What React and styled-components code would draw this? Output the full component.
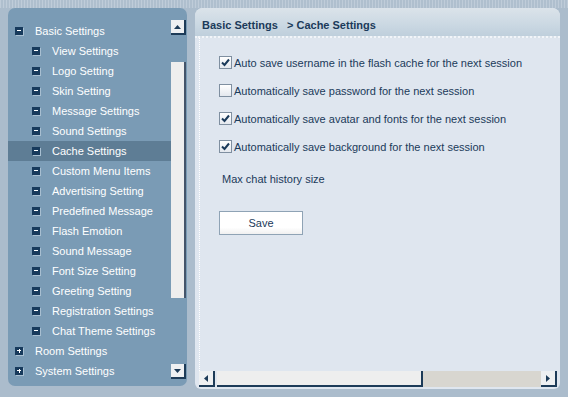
import React from 'react';
import styled, { createGlobalStyle } from 'styled-components';

const Global = createGlobalStyle`
  html, body { margin: 0; padding: 0; }
  body { background: #abbccc; font-family: "Liberation Sans", Arial, sans-serif; }
`;

const Page = styled.div`
  width: 568px;
  height: 397px;
  box-sizing: border-box;
  padding: 8px 8px 0 8px;
  display: flex;
  align-items: flex-start;
  gap: 8px;
  background:
    repeating-linear-gradient(90deg, #bfccd9 0 1px, #afbfce 1px 3px) top / 100% 8px no-repeat,
    #abbccc;
`;

const LeftPanel = styled.div`
  width: 179px;
  height: 378px;
  background: #7a9bb5;
  border-radius: 7px;
  display: flex;
  overflow: hidden;
`;

const Tree = styled.div`
  flex: 1;
  padding-top: 13px;
`;

const Row = styled.div`
  height: 20px;
  display: flex;
  align-items: center;
  padding-left: ${p => 7 + p.$level * 17}px;
  background: ${p => (p.$active ? '#5e7d95' : 'transparent')};
  color: #ffffff;
  font-size: 11px;
  white-space: nowrap;
`;

const NodeIcon = styled.span`
  position: relative;
  width: 8px;
  height: 8px;
  background: #173a5c;
  margin-right: 12px;
  flex: none;
  box-shadow: 1px 1px 0 #a8bfd1;
  &::before {
    content: '';
    position: absolute;
    left: 2px;
    top: 3px;
    width: 4px;
    height: 1px;
    background: #fff;
  }
  &::after {
    content: '';
    position: absolute;
    left: 3.5px;
    top: 1.5px;
    width: 1px;
    height: 4px;
    background: #fff;
    display: ${p => (p.$plus ? 'block' : 'none')};
  }
`;

const VScroll = styled.div`
  width: 16px;
  padding: 12px 0 7px;
  display: flex;
  flex-direction: column;
`;

const ScrollBtn = styled.div`
  width: ${p => (p.$w ? p.$w : 15)}px;
  height: ${p => (p.$h ? p.$h : 15)}px;
  box-sizing: border-box;
  background: #eef0f2;
  border-right: 2px solid #1d3b58;
  border-bottom: 2px solid #1d3b58;
  display: flex;
  align-items: center;
  justify-content: center;
  flex: none;
`;

const VThumb = styled.div`
  margin-top: 27px;
  height: 236px;
  width: 15px;
  box-sizing: border-box;
  background: #eeeeee;
  border-right: 2px solid #44546a;
`;

const Spacer = styled.div`
  flex: 1;
`;

const RightPanel = styled.div`
  width: 365px;
  height: 381px;
  background: #dfe6ef;
  border-radius: 8px 8px 6px 6px;
  display: flex;
  flex-direction: column;
  overflow: hidden;
`;

const Header = styled.div`
  height: 30px;
  box-sizing: border-box;
  padding: 6px 0 0 7px;
  display: flex;
  align-items: center;
  font-size: 11px;
  font-weight: bold;
  color: #1b3a5a;
  background: linear-gradient(#dbe3ea, #ccd9e3 55%, #bfcfdc);
  border-bottom: 2px dotted #f2f5f9;
  white-space: pre;
`;

const Body = styled.div`
  flex: 1;
  display: flex;
  flex-direction: column;
  padding: 0 3px 2px 4px;
`;

const Content = styled.div`
  flex: 1;
  border-left: 1px dotted #ffffff;
  padding: 18px 0 0 19px;
  color: #1b3a5a;
  font-size: 11px;
`;

const CheckRow = styled.label`
  display: flex;
  align-items: center;
  height: 13px;
  margin-bottom: 15px;
  gap: 2px;
  white-space: nowrap;
`;

const Box = styled.span`
  width: 13px;
  height: 13px;
  box-sizing: border-box;
  border: 1px solid #7f8fa0;
  background: linear-gradient(#ffffff, #e4e8ee);
  display: flex;
  align-items: center;
  justify-content: center;
  flex: none;
`;

const FieldLabel = styled.div`
  margin: 20px 0 0 3px;
  height: 13px;
  line-height: 13px;
`;

const SaveButton = styled.button`
  display: block;
  margin-top: 25px;
  width: 84px;
  height: 24px;
  box-sizing: border-box;
  border: 1px solid #8fa3b5;
  background: linear-gradient(#ffffff 70%, #f0f0f0 100%);
  font-family: "Liberation Sans", Arial, sans-serif;
  font-size: 11px;
  color: #1b3a5a;
  padding: 0;
`;

const HScroll = styled.div`
  height: 16px;
  display: flex;
  align-items: stretch;
`;

const HThumb = styled.div`
  width: 206px;
  margin-left: 2px;
  box-sizing: border-box;
  background: #eeeeee;
  border-right: 2px solid #1d3b58;
  border-bottom: 2px solid #1d3b58;
`;

const HTrack = styled.div`
  flex: 1;
  background: #d8d6d0;
`;

const Arrow = ({ dir }) => {
  const pts = {
    up: '0,4 3.5,0 7,4',
    down: '0,0 3.5,4 7,0',
    left: '4,0 0,3.5 4,7',
    right: '0,0 4,3.5 0,7',
  }[dir];
  const vert = dir === 'up' || dir === 'down';
  return (
    <svg width={vert ? 7 : 4} height={vert ? 4 : 7} viewBox={vert ? '0 0 7 4' : '0 0 4 7'}>
      <polygon points={pts} fill="#1d3b58" />
    </svg>
  );
};

const Check = () => (
  <svg width="9" height="9" viewBox="0 0 9 9">
    <path d="M1 4.5 L3.5 7 L8 1.5" stroke="#1b3a5a" strokeWidth="2" fill="none" />
  </svg>
);

const items = [
  { t: 'Basic Settings', l: 0 },
  { t: 'View Settings', l: 1 },
  { t: 'Logo Setting', l: 1 },
  { t: 'Skin Setting', l: 1 },
  { t: 'Message Settings', l: 1 },
  { t: 'Sound Settings', l: 1 },
  { t: 'Cache Settings', l: 1, a: true },
  { t: 'Custom Menu Items', l: 1 },
  { t: 'Advertising Setting', l: 1 },
  { t: 'Predefined Message', l: 1 },
  { t: 'Flash Emotion', l: 1 },
  { t: 'Sound Message', l: 1 },
  { t: 'Font Size Setting', l: 1 },
  { t: 'Greeting Setting', l: 1 },
  { t: 'Registration Settings', l: 1 },
  { t: 'Chat Theme Settings', l: 1 },
  { t: 'Room Settings', l: 0, p: true },
  { t: 'System Settings', l: 0, p: true },
];

const options = [
  { t: 'Auto save username in the flash cache for the next session', c: true },
  { t: 'Automatically save password for the next session', c: false },
  { t: 'Automatically save avatar and fonts for the next session', c: true },
  { t: 'Automatically save background for the next session', c: true },
];

export default function App() {
  return (
    <>
      <Global />
      <Page>
        <LeftPanel>
          <Tree>
            {items.map(it => (
              <Row key={it.t} $level={it.l} $active={it.a}>
                <NodeIcon $plus={it.p} />
                {it.t}
              </Row>
            ))}
          </Tree>
          <VScroll>
            <ScrollBtn><Arrow dir="up" /></ScrollBtn>
            <VThumb />
            <Spacer />
            <ScrollBtn><Arrow dir="down" /></ScrollBtn>
          </VScroll>
        </LeftPanel>
        <RightPanel>
          <Header>{'Basic Settings   > Cache Settings'}</Header>
          <Body>
            <Content>
              {options.map(o => (
                <CheckRow key={o.t}>
                  <Box>{o.c && <Check />}</Box>
                  {o.t}
                </CheckRow>
              ))}
              <FieldLabel>Max chat history size</FieldLabel>
              <SaveButton>Save</SaveButton>
            </Content>
            <HScroll>
              <ScrollBtn $w={16} $h={16}><Arrow dir="left" /></ScrollBtn>
              <HThumb />
              <HTrack />
              <ScrollBtn $w={16} $h={16}><Arrow dir="right" /></ScrollBtn>
            </HScroll>
          </Body>
        </RightPanel>
      </Page>
    </>
  );
}
